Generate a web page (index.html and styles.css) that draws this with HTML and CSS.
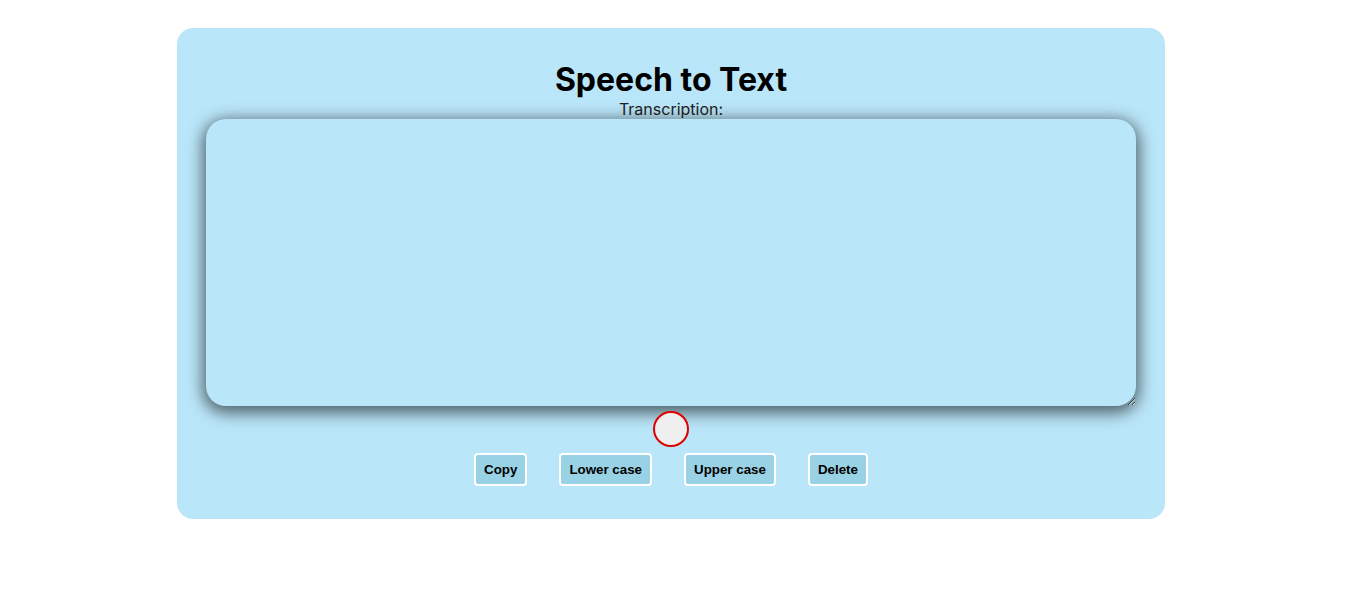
FILE: index.html
```html
<!DOCTYPE html>
<html>
<head>
<meta charset="utf-8">
<link rel="stylesheet" href="styles.css">
</head>
<body>
<div class="page">
  <main class="card">
    <h1 class="title">Speech to Text</h1>
    <label class="label" for="t">Transcription:</label>
    <textarea id="t" class="area" autofocus></textarea>
    <button class="mic" aria-label="record"></button>
    <div class="actions">
      <button class="btn">Copy</button>
      <button class="btn">Lower case</button>
      <button class="btn">Upper case</button>
      <button class="btn">Delete</button>
    </div>
  </main>
</div>
</body>
</html>
```
FILE: styles.css
```css
html, body {
  margin: 0;
  background: #ffffff;
}
.page {
  padding: 28px 5px 0 0;
}
.card {
  width: 988px;
  margin: 0 auto;
  box-sizing: border-box;
  background: #bae6f9;
  border-radius: 16px;
  padding: 32px 29px 33px;
  display: flex;
  flex-direction: column;
  align-items: center;
  font-family: Inter, "Noto Sans", sans-serif;
}
.title {
  margin: 0;
  font-size: 32px;
  font-weight: 700;
  line-height: 40px;
  color: #000;
}
.label {
  font-size: 16px;
  line-height: 19px;
  color: #222;
}
.area {
  width: 930px;
  height: 287px;
  box-sizing: border-box;
  margin: 0;
  background: #bae6f9;
  border: none;
  border-radius: 20px;
  box-shadow: 0 4px 16px 3px rgba(0, 0, 0, 0.58);
  text-align: center;
  padding: 14px;
  font-family: Inter, sans-serif;
  font-size: 16px;
  outline: none;
  resize: both;
}
.mic {
  width: 36px;
  height: 36px;
  margin-top: 5px;
  border-radius: 50%;
  border: 2px solid #e00000;
  background: #efefef;
  padding: 0;
}
.actions {
  display: flex;
  gap: 32px;
  margin-top: 6px;
}
.btn {
  font-family: "Liberation Sans", Arial, sans-serif;
  font-weight: 700;
  font-size: 13.333px;
  line-height: 15px;
  padding: 7px 8px;
  background: #99d2e4;
  color: #000;
  border: 2px solid #ffffff;
  border-radius: 4px;
}
```
